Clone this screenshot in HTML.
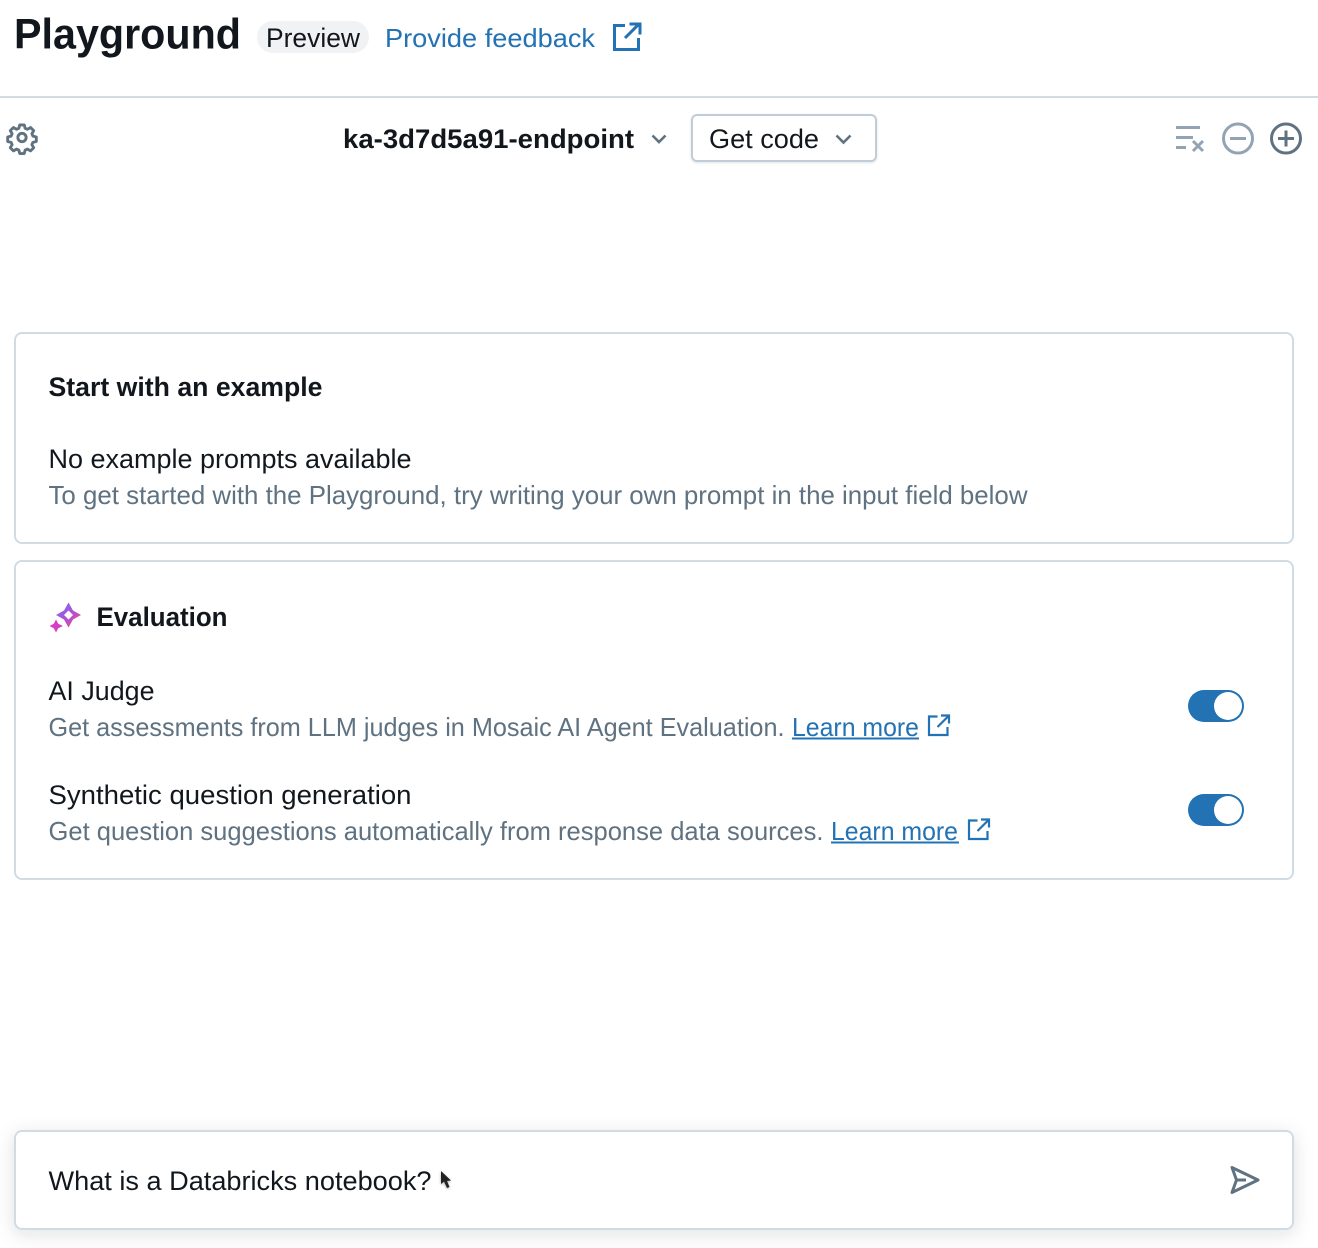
<!DOCTYPE html>
<html lang="en"><head><meta charset="utf-8"><title>Playground</title>
<style>
html,body{margin:0;padding:0;background:#fff;width:1318px;height:1248px;overflow:hidden}
svg{display:block}
text{font-family:"Liberation Sans",Arial,sans-serif;white-space:pre}
.b{font-size:27px;fill:#11171c}
.g{font-size:26px;fill:#5f7281}
.l{font-size:26px;fill:#2272b4}
.h{font-size:27px;font-weight:bold;fill:#11171c}
</style></head><body>
<svg width="1318" height="1248" viewBox="0 0 1318 1248" xmlns="http://www.w3.org/2000/svg">
<defs>
<linearGradient id="sp" x1="0" y1="0" x2="1" y2="1"><stop offset="0" stop-color="#6a7cf0"/><stop offset=".5" stop-color="#b04fd8"/><stop offset="1" stop-color="#f4507a"/></linearGradient>
<filter id="sh" x="-5%" y="-40%" width="110%" height="190%"><feDropShadow dx="0" dy="4" stdDeviation="9" flood-color="#1f2d3a" flood-opacity=".13"/></filter>
<filter id="sb" x="-5%" y="-10%" width="110%" height="130%"><feDropShadow dx="0" dy="1" stdDeviation="1" flood-color="#1f2d3a" flood-opacity=".12"/></filter>
<filter id="cs" x="-50%" y="-50%" width="200%" height="200%"><feDropShadow dx="0" dy="1" stdDeviation="1.200" flood-color="#000" flood-opacity=".35"/></filter>
</defs>

<!-- header -->
<text x="14" y="48.500" font-size="43" font-weight="bold" fill="#11171c" textLength="227" lengthAdjust="spacingAndGlyphs">Playground</text>
<rect x="257" y="21" width="112" height="32" rx="16" fill="#f1f2f4"/>
<text x="266" y="47" class="b" textLength="94" lengthAdjust="spacingAndGlyphs">Preview</text>
<text x="385" y="47" class="l" font-size="27" textLength="210" lengthAdjust="spacingAndGlyphs">Provide feedback</text>
<g fill="none" stroke="#2272b4" stroke-width="3"><path d="M625 25.500H614.500V49.500H638.500V38"/><path d="M625 38L639 24M629.500 24H640V34.500"/></g>
<rect x="0" y="96" width="1318" height="2" fill="#d1dbe4"/>

<!-- toolbar -->
<g transform="translate(8.500 124) scale(.9)" fill="none" stroke="#5f7281" stroke-width="3.200" stroke-linejoin="round">
<path d="M12.500 1.500h5l1 3.800 2.600 1.100 3.400-2 3.500 3.500-2 3.400 1.100 2.600 3.800 1v5l-3.800 1-1.100 2.600 2 3.400-3.500 3.500-3.400-2-2.600 1.100-1 3.800h-5l-1-3.800-2.600-1.100-3.400 2-3.500-3.500 2-3.400-1.100-2.600-3.800-1v-5l3.800-1 1.100-2.600-2-3.400 3.500-3.500 3.400 2 2.600-1.100z" transform="translate(0 -.5)"/>
<circle cx="15" cy="15" r="4.600"/></g>
<text x="343" y="148" font-size="27" font-weight="bold" fill="#11171c" textLength="291" lengthAdjust="spacingAndGlyphs">ka-3d7d5a91-endpoint</text>
<path d="M652.500 135.500L659 142L665.500 135.500" fill="none" stroke="#5f7281" stroke-width="2.600"/>
<rect x="692" y="115" width="184" height="46" rx="5" fill="#fff" stroke="#c0cdd8" stroke-width="2" filter="url(#sb)"/>
<text x="709" y="148" class="b" textLength="110" lengthAdjust="spacingAndGlyphs">Get code</text>
<path d="M836.500 135.500L843.500 142.500L850.500 135.500" fill="none" stroke="#5f7281" stroke-width="2.600"/>
<g fill="#92a4b3"><rect x="1176" y="126" width="24" height="3"/><rect x="1176" y="136" width="17" height="3"/><rect x="1176" y="146" width="10" height="3"/></g>
<path d="M1193 141L1203 151M1203 141L1193 151" stroke="#92a4b3" stroke-width="3" fill="none"/>
<circle cx="1238" cy="138.500" r="14.500" fill="none" stroke="#92a4b3" stroke-width="3"/>
<rect x="1230" y="137" width="16" height="3" fill="#92a4b3"/>
<circle cx="1286" cy="138.500" r="14.500" fill="none" stroke="#5f7281" stroke-width="3"/>
<path d="M1278 138.500H1294M1286 130.500V146.500" stroke="#5f7281" stroke-width="3" fill="none"/>

<!-- card 1 -->
<rect x="15" y="333" width="1278" height="210" rx="7" fill="#fff" stroke="#d1dbe4" stroke-width="2"/>
<text x="48.500" y="396" class="h" textLength="274" lengthAdjust="spacingAndGlyphs">Start with an example</text>
<text x="48.500" y="468" class="b" textLength="363" lengthAdjust="spacingAndGlyphs">No example prompts available</text>
<text x="48.500" y="504" class="g" textLength="979" lengthAdjust="spacingAndGlyphs">To get started with the Playground, try writing your own prompt in the input field below</text>

<!-- card 2 -->
<rect x="15" y="561" width="1278" height="318" rx="7" fill="#fff" stroke="#d1dbe4" stroke-width="2"/>
<path d="M68.500 602.500L73 610.500L81 615L73 619.500L68.500 627.500L64 619.500L56 615L64 610.500Z" fill="url(#sp)"/>
<path d="M68.500 610.500L73 615L68.500 619.500L64 615Z" fill="#fff"/>
<path d="M56 619.500L58.200 623.800L63 626L58.200 628.200L56 632.500L53.800 628.200L49.500 626L53.800 623.800Z" fill="#d63fc4"/>
<text x="96.500" y="626" class="h" textLength="131" lengthAdjust="spacingAndGlyphs">Evaluation</text>

<text x="48.500" y="700" class="b" textLength="106" lengthAdjust="spacingAndGlyphs">AI Judge</text>
<text x="48.500" y="736" class="g" textLength="736" lengthAdjust="spacingAndGlyphs">Get assessments from LLM judges in Mosaic AI Agent Evaluation.</text>
<text x="792" y="736" class="l" textLength="127" lengthAdjust="spacingAndGlyphs">Learn more</text>
<rect x="792" y="737.500" width="127" height="2" fill="#2272b4"/>
<g fill="none" stroke="#2272b4" stroke-width="2.200"><path d="M937.500 716.500H929V735H947.500V727"/><path d="M937.500 727L948.500 716M941 715.500H949V723.500"/></g>
<rect x="1188" y="690" width="56" height="32" rx="16" fill="#2272b4"/>
<circle cx="1228" cy="706" r="14" fill="#fff"/>

<text x="48.500" y="804" class="b" textLength="363" lengthAdjust="spacingAndGlyphs">Synthetic question generation</text>
<text x="48.500" y="840" class="g" textLength="775" lengthAdjust="spacingAndGlyphs">Get question suggestions automatically from response data sources.</text>
<text x="831" y="840" class="l" textLength="127" lengthAdjust="spacingAndGlyphs">Learn more</text>
<rect x="831" y="841.500" width="128" height="2" fill="#2272b4"/>
<g fill="none" stroke="#2272b4" stroke-width="2.200"><path d="M977.500 820.500H969V839H987.500V831"/><path d="M977.500 831L988.500 820M981 819.500H989V827.500"/></g>
<rect x="1188" y="794" width="56" height="32" rx="16" fill="#2272b4"/>
<circle cx="1228" cy="810" r="14" fill="#fff"/>

<!-- input -->
<rect x="15" y="1131" width="1278" height="98" rx="7" fill="#fff" stroke="#d1dbe4" stroke-width="2" filter="url(#sh)"/>
<text x="48.500" y="1190" class="b" textLength="383" lengthAdjust="spacingAndGlyphs">What is a Databricks notebook?</text>
<path d="M441 1171L441 1184L444 1181.500L447 1188L449.500 1187L447 1181L451 1180.500Z" fill="#222" filter="url(#cs)"/>
<path d="M1232 1167.500L1258 1180L1232 1192.500L1236.500 1180ZM1236.500 1180H1246" fill="none" stroke="#5f7281" stroke-width="3" stroke-linejoin="round"/>
</svg>
</body></html>
